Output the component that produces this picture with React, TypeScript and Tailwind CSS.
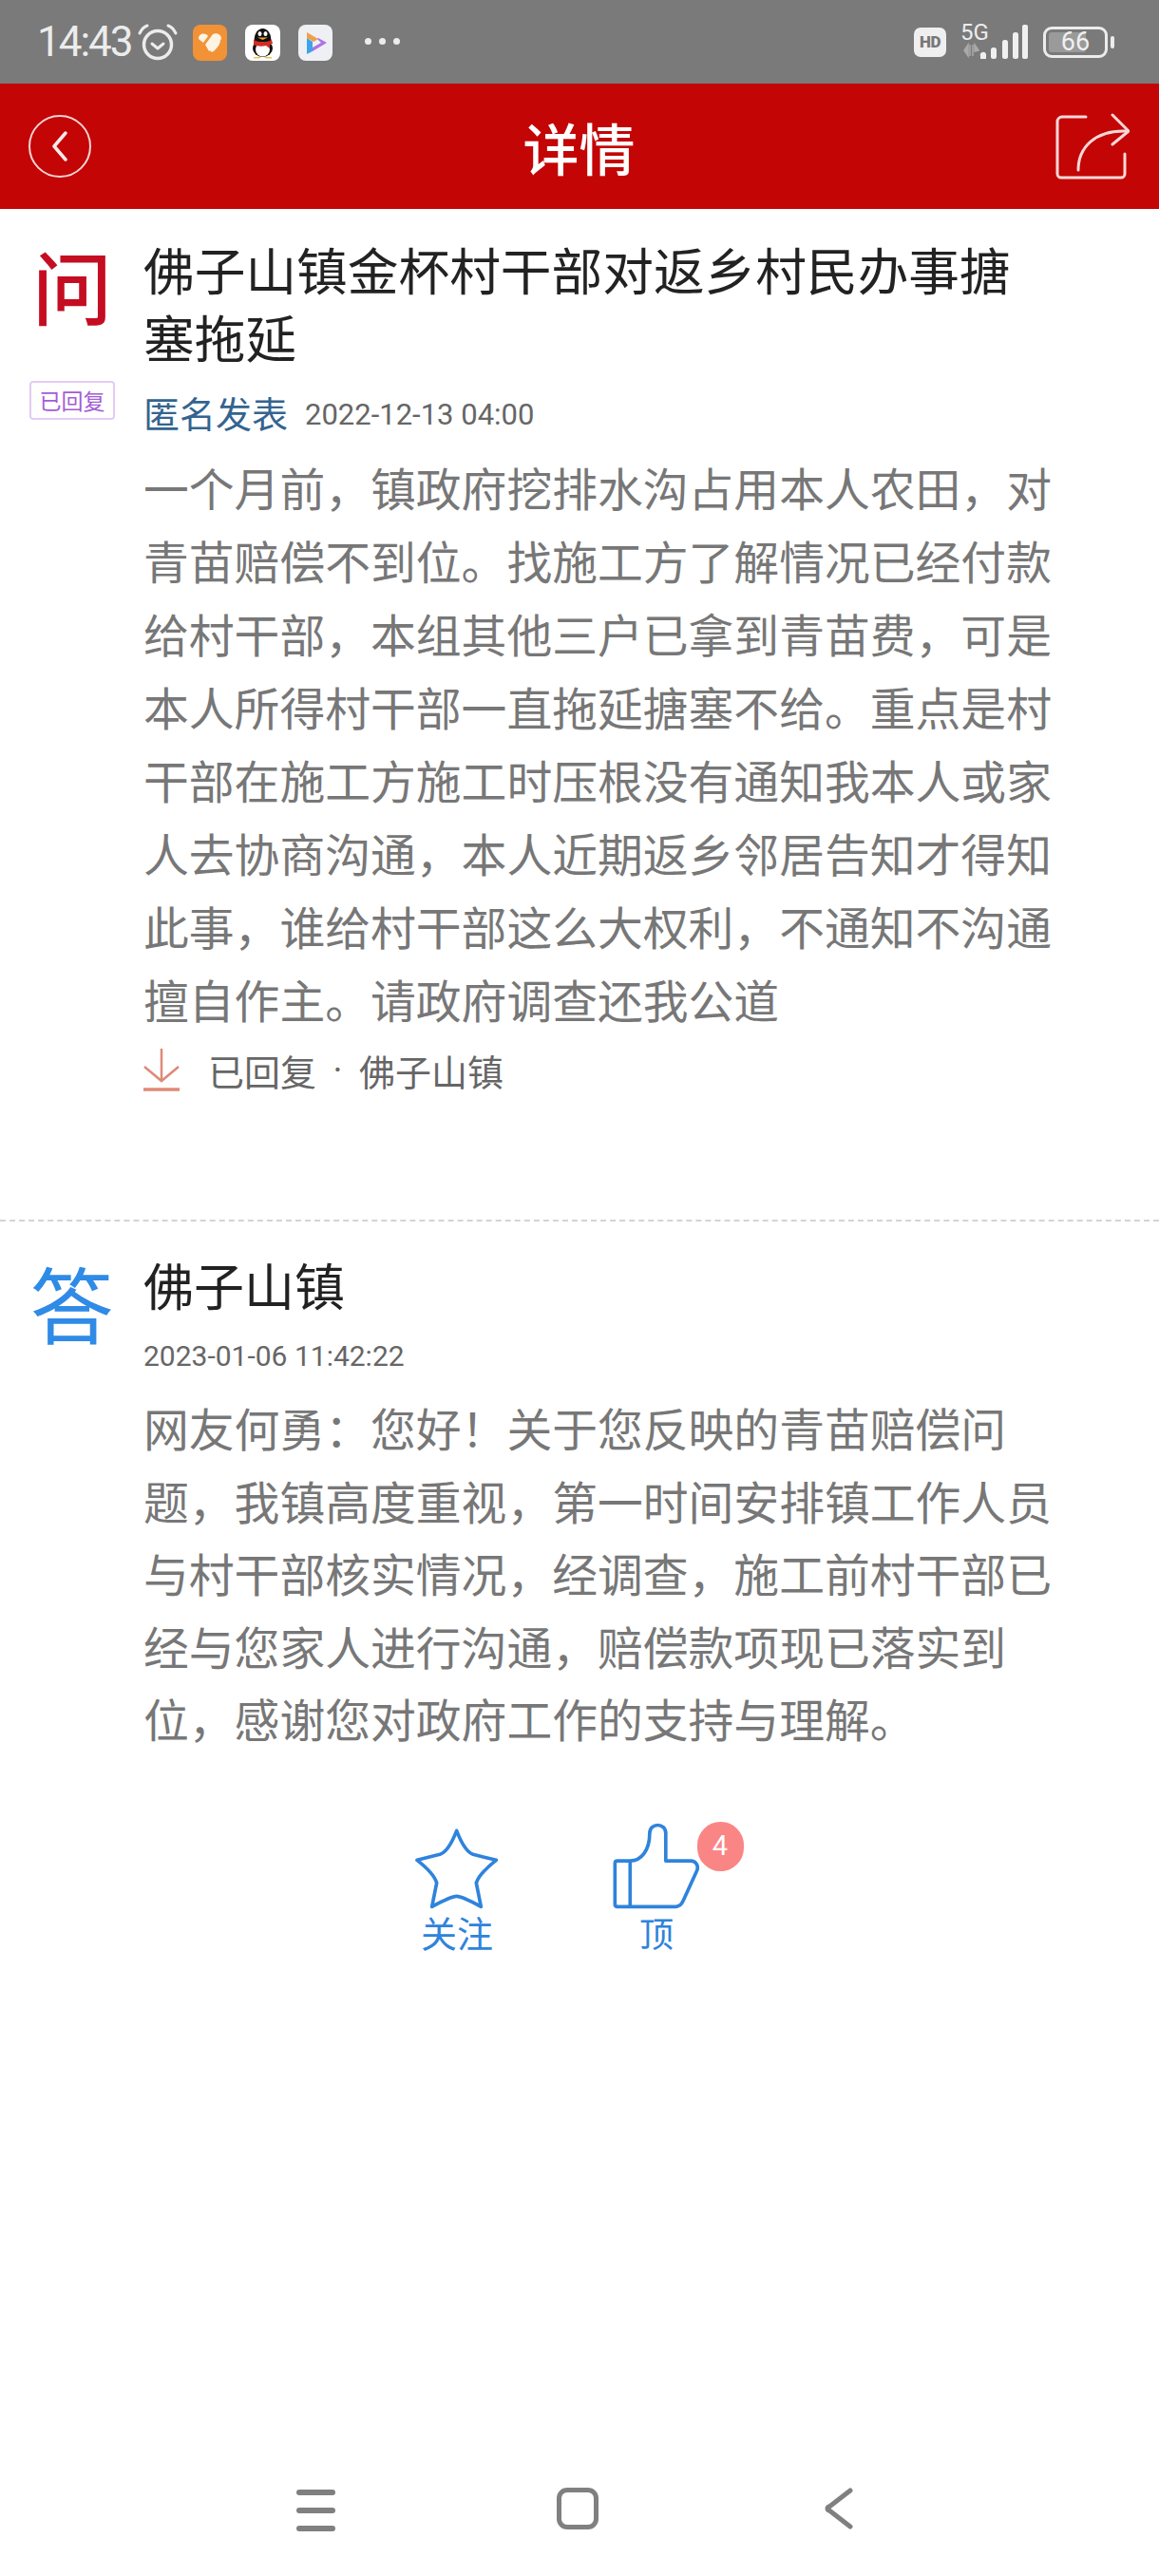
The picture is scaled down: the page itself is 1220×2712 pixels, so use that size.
const cjk = "font-['Noto_Sans_CJK_SC','Noto_Sans',sans-serif]";
const latin = "font-['Roboto','Noto_Sans_CJK_SC',sans-serif]";

// full-width punctuation kept as escapes
const C = "\uFF0C";

const question = [
  `一个月前${C}镇政府挖排水沟占用本人农田${C}对`,
  "青苗赔偿不到位。找施工方了解情况已经付款",
  `给村干部${C}本组其他三户已拿到青苗费${C}可是`,
  "本人所得村干部一直拖延搪塞不给。重点是村",
  "干部在施工方施工时压根没有通知我本人或家",
  `人去协商沟通${C}本人近期返乡邻居告知才得知`,
  `此事${C}谁给村干部这么大权利${C}不通知不沟通`,
  "擅自作主。请政府调查还我公道",
];

const answer = [
  `网友何勇\uFF1A您好\uFF01关于您反映的青苗赔偿问`,
  `题${C}我镇高度重视${C}第一时间安排镇工作人员`,
  `与村干部核实情况${C}经调查${C}施工前村干部已`,
  `经与您家人进行沟通${C}赔偿款项现已落实到`,
  `位${C}感谢您对政府工作的支持与理解。`,
];

function StatusBar() {
  return (
    <div className="flex h-[88px] shrink-0 items-center bg-[#7a7a7a] pl-[39px] pr-[47px] text-[#ececec]">
      <span className={`${latin} w-[105px] text-[44px] leading-none tracking-[-2px]`}>14:43</span>
      {/* alarm */}
      <svg width="44" height="40" viewBox="0 0 44 40" className="mt-[2px]" fill="none" stroke="#ececec" strokeLinecap="round">
        <circle cx="22" cy="22" r="14.5" strokeWidth="3.5" />
        <path d="M16 21l6 5 6-5" strokeWidth="3" strokeLinejoin="round" />
        <path d="M3 10C5 6 8 3 11 2M41 10C39 6 36 3 33 2" strokeWidth="3" />
      </svg>
      {/* health app */}
      <svg width="36" height="38" viewBox="0 0 36 38" className="ml-[15px] mt-[2px]">
        <rect width="36" height="38" rx="8" fill="#f19236" />
        <path d="M6 15c0-6 7-7 10-3l-5 7zM13 21l8-11c4-2 9 0 9 5l-13 13zM21 23l8-7c0 4-3 8-6 11l-3 2-2-2z" fill="#fff3e3" />
      </svg>
      {/* qq */}
      <svg width="37" height="38" viewBox="0 0 37 38" className="ml-[19px] mt-[2px]">
        <rect width="37" height="38" rx="8" fill="#fff" />
        <ellipse cx="18.5" cy="16" rx="9" ry="12" fill="#111" />
        <ellipse cx="18.5" cy="25" rx="10.5" ry="9" fill="#111" />
        <ellipse cx="18.5" cy="26" rx="7.5" ry="7.5" fill="#fff" />
        <path d="M9 16c6 3 13 3 19 0l1 4-3 1v4l-4-3c-4 1-9 1-13-1z" fill="#d42c22" />
        <ellipse cx="15.5" cy="9.5" rx="2" ry="2.6" fill="#fff" />
        <ellipse cx="21.5" cy="9.5" rx="2" ry="2.6" fill="#fff" />
        <path d="M13 13.5h11l-5.500 2.500z" fill="#f0a52c" />
        <path d="M9 34h8l-2 1.500H9zM20 34h8v1.500h-6z" fill="#f0c04c" />
      </svg>
      {/* video app */}
      <svg width="36" height="38" viewBox="0 0 36 38" className="ml-[19px] mt-[2px]">
        <rect width="36" height="38" rx="8" fill="#eff0f4" />
        <path d="M9 8l12 7-5 3-7-4z" fill="#f0a04a" />
        <path d="M9 14v17l6-3V18z" fill="#3ea4ea" />
        <path d="M15 28l15-9-9-5-1 1 4 4-9 5z" fill="#ae73e6" />
      </svg>
      <div className="ml-[34px] mt-[-2px] flex gap-[8px]">
        <span className="h-[7px] w-[7px] rounded-full bg-[#ececec]" />
        <span className="h-[7px] w-[7px] rounded-full bg-[#ececec]" />
        <span className="h-[7px] w-[7px] rounded-full bg-[#ececec]" />
      </div>

      <div className="ml-auto flex items-center">
        <span className={`${latin} flex h-[31px] w-[34px] items-center justify-center rounded-[7px] bg-[#efefef] text-[17px] font-black leading-none tracking-[-0.5px] text-[#777]`}>HD</span>
        {/* 5G + signal */}
        <div className="relative ml-[15px] h-[38px] w-[72px]">
          <span className={`${latin} absolute left-0 top-[-3px] text-[24px] leading-[24px] text-[#ececec]`}>5G</span>
          <svg width="72" height="38" viewBox="0 0 72 38">
            <path d="M8 22v12l-4-6zM10 22v12M13 22v12M15 22l4 6-4 1z" stroke="#aaa" strokeWidth="1.500" fill="#aaa" />
            <path d="M21 37v-3a3 3 0 0 1 6-2v5z" fill="#f0f0f0" />
            <rect x="32" y="25" width="6" height="12" rx="2.500" fill="#f0f0f0" />
            <rect x="44" y="17" width="6" height="20" rx="2.500" fill="#f0f0f0" />
            <rect x="55" y="9" width="6" height="28" rx="2.500" fill="#f0f0f0" />
            <rect x="65" y="1" width="6" height="36" rx="2" fill="#f0f0f0" />
          </svg>
        </div>
        {/* battery */}
        <div className="ml-[15px] flex items-center">
          <div className="relative flex h-[33px] w-[68px] items-center rounded-[9px] border-[3px] border-[#ececec] p-[3px]">
            <div className="h-full w-[39px] rounded-[3px] bg-[#9a9a9a]" />
            <span className={`${latin} absolute inset-0 flex items-center justify-center text-[27px] leading-none text-[#f0f0f0]`}>66</span>
          </div>
          <span className="ml-[3px] h-[13px] w-[4px] rounded-full bg-[#ececec]" />
        </div>
      </div>
    </div>
  );
}

function Header() {
  return (
    <div className="flex h-[132px] shrink-0 items-center bg-[#c30505] pl-[30px] pr-[31px]">
      <div className="flex-1">
        <div className="flex h-[66px] w-[66px] items-center justify-center rounded-full border-2 border-[#f5d5d5]">
          <svg width="20" height="32" viewBox="0 0 20 32" fill="none" stroke="#fbeaea" strokeWidth="3.500" strokeLinecap="round" strokeLinejoin="round">
            <path d="M16 2L4 16l12 14" />
          </svg>
        </div>
      </div>
      <span className={`${cjk} text-[59px] font-medium leading-none text-white`}>详情</span>
      <div className="flex flex-1 justify-end">
        <svg width="78" height="70" viewBox="0 0 78 70" fill="none" stroke="#f8d7d7" strokeWidth="3" strokeLinecap="round" strokeLinejoin="round">
          <path d="M32 4H7a5 5 0 0 0-5 5v55a4 4 0 0 0 4 4h63a4 4 0 0 0 4-4V43" />
          <path d="M24 60c0-24 18-42 50-41" />
          <path d="M60 2l17 17-17 14" />
        </svg>
      </div>
    </div>
  );
}

function StarIcon() {
  return (
    <svg width="90" height="86" viewBox="110 125 268 258" fill="none" stroke="#2f83dc" strokeWidth="11" strokeLinejoin="round">
      <path d="M243 135Q268 200 295 210L368 228Q315 270 305 300L320 375Q260 342 243 342T165 375L180 300Q172 270 118 228L190 210Q218 200 243 135Z" />
    </svg>
  );
}

function ThumbIcon() {
  return (
    <svg width="93" height="92" viewBox="735 115 280 275" fill="none" stroke="#2f83dc" strokeWidth="11" strokeLinejoin="round">
      <path d="M790 238C825 238 852 205 852 150C852 116 903 116 903 150V238H982C998 238 1008 252 1002 268L958 365C952 378 945 383 935 383H750C745 383 742 380 742 375V246C742 241 745 238 750 238Z" />
      <path d="M790 238V383" />
    </svg>
  );
}

export default function App() {
  return (
    <div className={`${cjk} flex h-[2712px] w-[1220px] flex-col overflow-hidden bg-white`}>
      <StatusBar />
      <Header />

      <div className="flex pt-[27px]">
        <div className="flex w-[151px] shrink-0 flex-col items-center pl-[28px] pr-[27px]">
          <span className="mt-[8px] text-[84px] font-medium leading-[90px] text-[#c50d22]">问</span>
          <span className="mt-[56px] flex h-[41px] w-[90px] items-center justify-center rounded-[4px] border-2 border-[#e3ccf1] text-[23px] leading-none text-[#a45cd6]">已回复</span>
        </div>
        <div className="min-w-0 flex-1">
          <h1 className="w-[960px] text-[53.7px] font-normal leading-[71px] text-[#222]">佛子山镇金杯村干部对返乡村民办事搪塞拖延</h1>
          <div className="mt-[17px] flex h-[56px] items-center">
            <span className="text-[38px] leading-none text-[#34648f]">匿名发表</span>
            <span className={`${latin} ml-[18px] mt-[4px] text-[31px] leading-none text-[#666]`}>2022-12-13 04:00</span>
          </div>
          <div className="mt-[12px] text-[47.8px] leading-[77px] text-[#777]">
            {question.map((line) => (
              <div key={line}>{line}</div>
            ))}
          </div>
          <div className="mt-[14px] flex h-[46px] items-center">
            <svg width="38" height="46" viewBox="0 0 38 46" fill="none" stroke="#de8a78" strokeWidth="2.500" className="mt-[-2px]">
              <path d="M19 1v33M1 20l18 15 18-15" />
              <path d="M0 44h38" strokeWidth="3.500" />
            </svg>
            <div className="ml-[30px] flex text-[38px] leading-none text-[#666]">
              <span>已回复</span>
              <span className={`${latin} flex w-[45px] justify-center`}>·</span>
              <span>佛子山镇</span>
            </div>
          </div>
        </div>
      </div>

      <div className="mt-[134px] border-t-2 border-dashed border-[#d4d4d4]" />

      <div className="flex pt-[28px]">
        <div className="flex w-[151px] shrink-0 justify-center">
          <span className="mt-[6px] text-[88px] leading-[100px] text-[#2f8be6]">答</span>
        </div>
        <div className="min-w-0 flex-1">
          <h2 className="text-[53px] font-normal leading-[76px] text-[#222]">佛子山镇</h2>
          <div className={`${latin} mt-[18px] text-[30px] leading-[40px] text-[#666]`}>2023-01-06 11:42:22</div>
          <div className="mt-[17px] text-[47.8px] leading-[76.500px] text-[#777]">
            {answer.map((line) => (
              <div key={line}>{line}</div>
            ))}
          </div>
        </div>
      </div>

      <div className="mt-[72px] flex gap-[110px] pl-[431px] text-[#2f83dc]">
        <div className="flex w-[100px] flex-col items-center">
          <div className="flex h-[90px] items-end"><StarIcon /></div>
          <span className="mt-[-1px] text-[38px] leading-[50px]">关注</span>
        </div>
        <div className="flex w-[100px] flex-col items-center">
          <div className="relative flex h-[90px] items-end">
            <ThumbIcon />
            <span className={`${latin} absolute left-[89px] top-[-2px] flex h-[52px] w-[49px] items-center justify-center rounded-full bg-[#fa8585] text-[29px] leading-none text-white`}>4</span>
          </div>
          <span className="mt-[-1px] text-[36px] leading-[50px]">顶</span>
        </div>
      </div>

      <div className="mt-auto flex h-[109px] shrink-0 items-start pl-[312px]">
        <div className="mt-[18px] flex w-[41px] flex-col gap-[13px]">
          <span className="h-[6px] rounded-full bg-[#808080]" />
          <span className="h-[6px] rounded-full bg-[#808080]" />
          <span className="h-[6px] rounded-full bg-[#808080]" />
        </div>
        <div className="ml-[233px] mt-[16px] h-[44px] w-[44px] rounded-[11px] border-[5px] border-[#808080]" />
        <svg width="30" height="44" viewBox="0 0 30 44" fill="none" stroke="#808080" strokeWidth="5" strokeLinecap="round" strokeLinejoin="round" className="ml-[238px] mt-[16px]">
          <path d="M27 3L5 20a2 2 0 0 0 0 4l22 17" />
        </svg>
      </div>
    </div>
  );
}
